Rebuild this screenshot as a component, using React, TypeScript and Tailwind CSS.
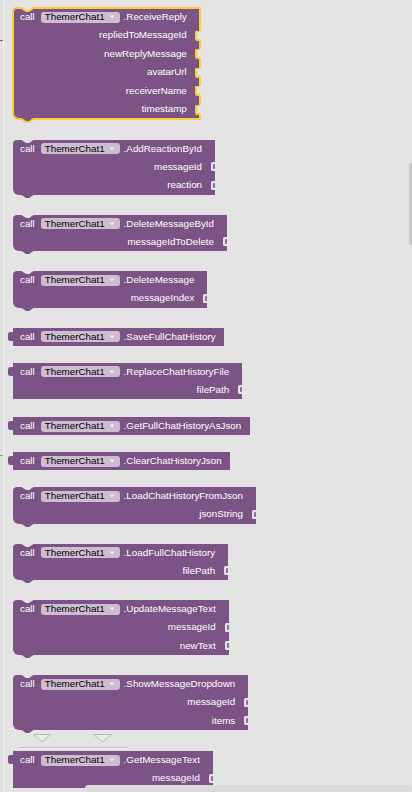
import clsx from "clsx";

type BlockDef = {
  name: string;
  inputs: string[];
  kind: "statement" | "value";
  selected?: boolean;
  flush?: boolean;
};

const blocks: BlockDef[] = [
  {
    name: "ReceiveReply",
    inputs: ["repliedToMessageId", "newReplyMessage", "avatarUrl", "receiverName", "timestamp"],
    kind: "statement",
    selected: true,
  },
  { name: "AddReactionById", inputs: ["messageId", "reaction"], kind: "statement" },
  { name: "DeleteMessageById", inputs: ["messageIdToDelete"], kind: "statement" },
  { name: "DeleteMessage", inputs: ["messageIndex"], kind: "statement" },
  { name: "SaveFullChatHistory", inputs: [], kind: "value" },
  { name: "ReplaceChatHistoryFile", inputs: ["filePath"], kind: "value" },
  { name: "GetFullChatHistoryAsJson", inputs: [], kind: "value" },
  { name: "ClearChatHistoryJson", inputs: [], kind: "value" },
  { name: "LoadChatHistoryFromJson", inputs: ["jsonString"], kind: "statement" },
  { name: "LoadFullChatHistory", inputs: ["filePath"], kind: "statement" },
  { name: "UpdateMessageText", inputs: ["messageId", "newText"], kind: "statement" },
  { name: "ShowMessageDropdown", inputs: ["messageId", "items"], kind: "statement", flush: true },
];

const lastBlock: BlockDef = { name: "GetMessageText", inputs: ["messageId"], kind: "value" };

const BG = "#e4e4e4";
const PURPLE = "#7c5385";
const YELLOW = "#ffcc33";

// socket / output tab, x=6 is the block edge
const TAB = "M6,0 H3.5 Q2,0 2,1.5 V7.5 Q2,9 3.5,9 H6 Z";
const TAB_EDGE = "M6,0 H3.5 Q2,0 2,1.5 V7.5 Q2,9 3.5,9 H6";
const DIP = "M0,1 C2,1 3.5,4 5.5,4 H7.5 C9.5,4 11,1 13,1";

function Notch({ selected }: { selected?: boolean }) {
  return (
    <svg width="13" height="6" className="absolute left-[7.5px] top-[-1px]">
      <path d="M0,0 H13 V1 C11,1 9.5,4 7.5,4 H5.5 C3.5,4 2,1 0,1 Z" fill={BG} />
      {selected && <path d={DIP} fill="none" stroke={YELLOW} strokeWidth="2" />}
    </svg>
  );
}

function BottomTab({ selected }: { selected?: boolean }) {
  return (
    <svg width="13" height="6" className="absolute bottom-[-5px] left-[7.5px]">
      <path d="M0,0 H13 V1 C11,1 9.5,4 7.5,4 H5.5 C3.5,4 2,1 0,1 Z" fill={PURPLE} />
      {selected && <path d={DIP} fill="none" stroke={YELLOW} strokeWidth="2" />}
    </svg>
  );
}

function Socket({ selected }: { selected?: boolean }) {
  return (
    <svg width="7" height="10" className="absolute right-[-1px] top-[4.5px]">
      {selected && <rect x="6" y="0" width="1" height="9" fill={BG} />}
      <path d={TAB} fill={BG} />
      {selected ? (
        <path d={TAB_EDGE} fill="none" stroke={YELLOW} strokeWidth="2" />
      ) : (
        <rect x="4" y="2.2" width="2" height="4.6" fill="#8f6c98" />
      )}
    </svg>
  );
}

function OutputTab() {
  return (
    <svg width="7" height="10" className="absolute left-[-6px] top-[4px]">
      <path d="M7,0 H3.5 Q1,0 1,2 V7 Q1,9 3.5,9 H7 Z" fill={PURPLE} />
    </svg>
  );
}

function DropArrow() {
  return (
    <svg width="6" height="4" className="ml-[4px]">
      <path d="M0.5,0.5 L5.5,0.5 L3,3.5 Z" fill="#f4eff5" />
    </svg>
  );
}

function Block({ b }: { b: BlockDef }) {
  const statement = b.kind === "statement";
  const pr = b.inputs.length ? "pr-[13px]" : "pr-[8.5px]";

  return (
    <div
      className={clsx(
        "relative ml-[9px] flex w-fit flex-col bg-[#7c5385] text-white",
        statement && "rounded-tl-[4px] rounded-bl-[6px]",
        b.selected && "shadow-[0_0_0_1px_#ffcc33,inset_0_0_0_1px_#ffcc33]",
        b.flush
          ? "mb-0"
          : b.selected
            ? "mb-[21px]"
            : statement
              ? "mb-[20px]"
              : b.inputs.length
                ? "mb-[18px]"
                : "mb-[17px]"
      )}
    >
      {statement && <Notch selected={b.selected} />}
      {!statement && <OutputTab />}

      {/* header */}
      <div className={clsx("flex h-[18px] items-center whitespace-nowrap pl-[7px]", pr)}>
        <span>call</span>
        <span className="ml-[6px] flex h-[11px] items-center rounded-[3px] bg-[#cdbdd0] pl-[4px] pr-[5px] text-black">
          ThemerChat1
          <DropArrow />
        </span>
        <span className="ml-[4px]">.{b.name}</span>
      </div>

      {/* inputs */}
      {b.inputs.map((label) => (
        <div
          key={label}
          className={clsx("relative flex h-[18.5px] items-center justify-end whitespace-nowrap pl-[7px]", pr)}
        >
          <span>{label}</span>
          <Socket selected={b.selected} />
        </div>
      ))}

      {statement && <BottomTab selected={b.selected} />}
    </div>
  );
}

function InsertMarker() {
  return (
    <div className="h-[21px]">
      <svg width="130" height="21">
        <path d="M29.5,4.5 H46.5 L38,12 Z" fill="#ebebeb" stroke="#b9b9b9" />
        <path d="M89.5,4.5 H107.5 L98.5,12 Z" fill="#ebebeb" stroke="#b9b9b9" />
        <line x1="15" y1="17.5" x2="124" y2="17.5" stroke="#c2c2c2" />
        <line x1="15" y1="18.5" x2="124" y2="18.5" stroke="#f2f2f2" />
      </svg>
    </div>
  );
}

export default function App() {
  return (
    <div className="relative flex h-[792px] w-[412px] overflow-hidden bg-[#e4e4e4] font-['Liberation_Sans',Arial,sans-serif] text-[9.8px] leading-[12px]">
      {/* edge of the workspace behind the flyout */}
      <div className="relative w-[3px] shrink-0 bg-[#dedede]">
        <div className="absolute left-0 top-[40px] h-[1px] w-[3px] bg-[#6b6b6b]" />
        <div className="absolute left-0 top-[455px] h-[1px] w-[3px] bg-[#9a9a9a]" />
      </div>

      <div className="flex flex-col border-l border-[#f1f1f1] pt-[8px]">
        {blocks.map((b) => (
          <Block key={b.name} b={b} />
        ))}
        <InsertMarker />
        <Block b={lastBlock} />
      </div>

      {/* scrollbars */}
      <div className="absolute right-0 top-[163px] h-[82px] w-[3px] rounded-l-[2px] bg-[#cacaca]" />
      <div className="absolute bottom-0 left-[85px] right-0 h-[7px] rounded-[3px] bg-[#dadada]" />
    </div>
  );
}
